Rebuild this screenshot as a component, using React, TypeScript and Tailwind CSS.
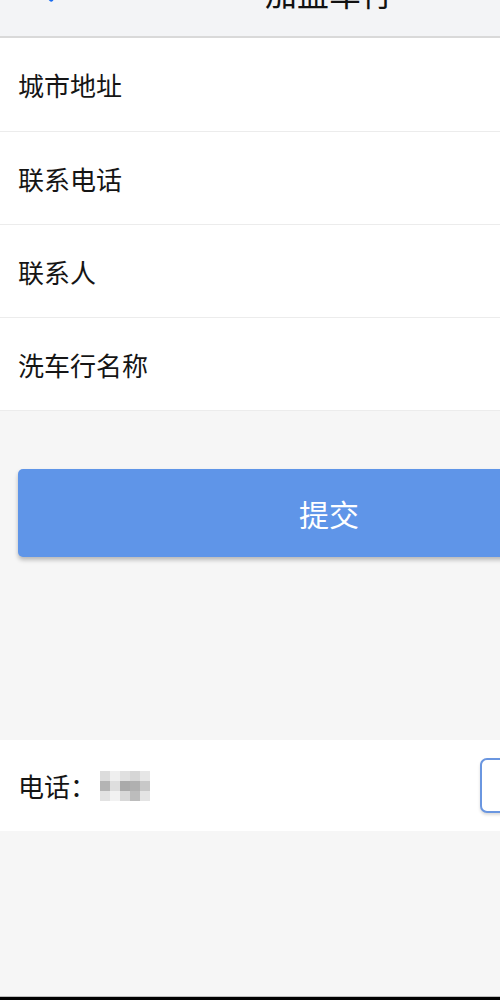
import { ChevronLeft } from 'lucide-react'

const fields = ['城市地址', '联系电话', '联系人', '洗车行名称']

const font = { fontFamily: '"Noto Sans CJK SC", "Noto Sans", sans-serif' }

export default function App() {
  return (
    <div className="w-[500px] h-[1000px] overflow-hidden bg-[#f6f6f6] flex flex-col" style={font}>
      <div className="w-[658px] flex-1 flex flex-col">
        {/* 顶部导航 */}
        <div className="-mt-[50px] h-[88px] shrink-0 bg-[#f3f4f6] border-b-2 border-[#d9d9d9] relative flex items-center justify-center">
          <ChevronLeft className="absolute left-[30px] top-[24px] h-[34px] w-[34px] text-[#1a6cf0]" strokeWidth={3} />
          <span className="text-[32px] leading-none text-[#111] -mt-[2px]">加盟车行</span>
        </div>

        {/* 表单 */}
        <div className="bg-white">
          {fields.map((f, i) => (
            <div
              key={f}
              className={`h-[93px] flex items-center pl-[18px] text-[26px] text-[#151515] ${i > 0 ? 'border-t border-[#ececec]' : ''}`}
            >
              {f}
            </div>
          ))}
        </div>
        <div className="h-px bg-[#ececec]" />

        {/* 提交 */}
        <div className="px-[18px] pt-[58px]">
          <button className="w-full h-[88px] rounded-[5px] bg-[#5f95e8] text-white text-[30px] shadow-[0_3px_4px_rgba(0,0,0,0.25)]">
            提交
          </button>
        </div>

        {/* 电话 */}
        <div className="mt-[183px] h-[91px] bg-white flex items-center pl-[18px] pr-[18px]">
          <span className="text-[26px] text-[#151515]">电话：</span>
          <span className="ml-[4px] flex flex-col">
            <span className="flex">
              <span className="w-[10px] h-[10px] bg-[#dcdcdc]" />
              <span className="w-[10px] h-[10px] bg-[#efefef]" />
              <span className="w-[10px] h-[10px] bg-[#e0e0e0]" />
              <span className="w-[10px] h-[10px] bg-[#d6d6d6]" />
              <span className="w-[10px] h-[10px] bg-[#e6e6e6]" />
            </span>
            <span className="flex">
              <span className="w-[10px] h-[10px] bg-[#b4b4b4]" />
              <span className="w-[10px] h-[10px] bg-[#dedede]" />
              <span className="w-[10px] h-[10px] bg-[#aaaaaa]" />
              <span className="w-[10px] h-[10px] bg-[#b0b0b0]" />
              <span className="w-[10px] h-[10px] bg-[#c8c8c8]" />
            </span>
            <span className="flex">
              <span className="w-[10px] h-[10px] bg-[#e2e2e2]" />
              <span className="w-[10px] h-[10px] bg-[#f2f2f2]" />
              <span className="w-[10px] h-[10px] bg-[#d8d8d8]" />
              <span className="w-[10px] h-[10px] bg-[#bcbcbc]" />
              <span className="w-[10px] h-[10px] bg-[#e4e4e4]" />
            </span>
          </span>
          <span className="ml-[330px] w-[120px] h-[55px] rounded-[7px] border-2 border-[#6a96e0] bg-white shadow-[0_2px_3px_rgba(0,0,0,0.15)]" />
        </div>
        <div className="flex-1" />
      </div>
      <div className="h-px bg-[#bdbdbd]" />
      <div className="h-[3px] bg-black" />
    </div>
  )
}
